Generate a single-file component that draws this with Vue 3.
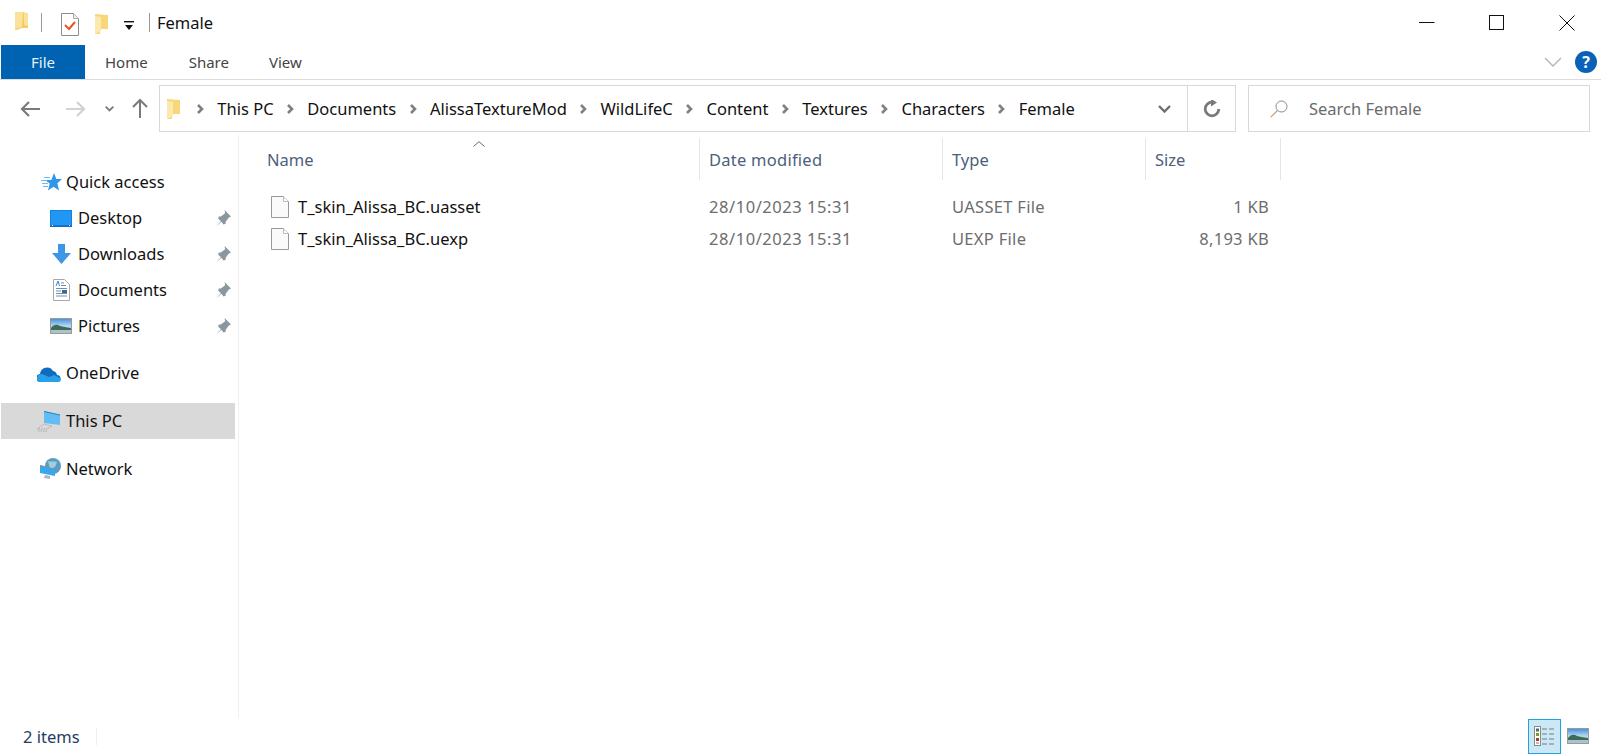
<script setup>
const crumbs = ['This PC', 'Documents', 'AlissaTextureMod', 'WildLifeC', 'Content', 'Textures', 'Characters', 'Female']
const files = [
  { name: 'T_skin_Alissa_BC.uasset', date: '28/10/2023 15:31', type: 'UASSET File', size: '1 KB' },
  { name: 'T_skin_Alissa_BC.uexp', date: '28/10/2023 15:31', type: 'UEXP File', size: '8,193 KB' }
]
</script>

<template>
  <div class="window">
    <header class="title">
      <svg class="i-folder-a" width="16" height="20" viewBox="0 0 16 20"><path d="M1 1h8l5 1v14H9l-7 3H1z" fill="#fbe29a"/><path d="M9 1l1 1v12l4 1v2H8l-6 2-1-1 7-2z" fill="#f4cc62"/></svg>
      <span class="t-sep first"></span>
      <svg class="i-check" width="18" height="23" viewBox="0 0 18 23"><path d="M.5.5h12l5 5v17H.5z" fill="#fff" stroke="#8c8c8c"/><path d="M12.500.5v5h5" fill="#eee" stroke="#aaa"/><path d="M4 12l4 4 6-7" fill="none" stroke="#e8541e" stroke-width="2"/></svg>
      <svg class="i-folder-b" width="15" height="22" viewBox="0 0 15 22"><path d="M1 1l13 1v14L6 16v5H1z" fill="#f7d77a"/><path d="M1 3l6 1v14l-6 3z" fill="#fbe9b0"/></svg>
      <svg class="i-drop" width="10" height="9" viewBox="0 0 10 9"><rect y="0" width="10" height="1.400" fill="#111"/><path d="M1 4h8l-4 5z" fill="#111"/></svg>
      <span class="t-sep second"></span>
      <span class="t-text">Female</span>
      <div class="winctl">
        <svg width="16" height="16" viewBox="0 0 16 16"><path d="M0 7.500h15.500" stroke="#111"/></svg>
        <svg width="16" height="16" viewBox="0 0 16 16"><rect x=".5" y=".5" width="14" height="14" fill="none" stroke="#111"/></svg>
        <svg width="16" height="16" viewBox="0 0 16 16"><path d="M.5.500l15 15M15.500.5l-15 15" stroke="#111" fill="none"/></svg>
      </div>
    </header>

    <div class="ribbon">
      <div class="tab file">File</div>
      <div class="tab home">Home</div>
      <div class="tab share">Share</div>
      <div class="tab view">View</div>
      <div class="rib-right">
        <svg width="18" height="10" viewBox="0 0 18 10"><path d="M1 1l8 8 8-8" fill="none" stroke="#b8b8b8" stroke-width="1.500"/></svg>
        <span class="help">?</span>
      </div>
    </div>

    <nav class="nav">
      <div class="nav-btns">
        <svg width="20" height="16" viewBox="0 0 20 16"><path d="M20 8H2M9 1L2 8l7 7" fill="none" stroke="#7a7a7a" stroke-width="2.200"/></svg>
        <svg class="fwd" width="20" height="16" viewBox="0 0 20 16"><path d="M0 8h18M11 1l7 7-7 7" fill="none" stroke="#d2d2d2" stroke-width="2.200"/></svg>
        <svg class="rec" width="9" height="6" viewBox="0 0 9 6"><path d="M.7.7l3.800 3.800L8.300.7" fill="none" stroke="#7a7a7a" stroke-width="1.800"/></svg>
        <svg class="up" width="16" height="20" viewBox="0 0 16 20"><path d="M8 20V2M1 9l7-7 7 7" fill="none" stroke="#7a7a7a" stroke-width="2"/></svg>
      </div>
      <div class="address">
        <svg class="addr-folder" width="15" height="22" viewBox="0 0 15 22"><path d="M1 1l13 1v14L6 16v5H1z" fill="#f7d77a"/><path d="M1 3l6 1v14l-6 3z" fill="#fbe9b0"/></svg>
        <div class="crumbs">
          <template v-for="c in crumbs" :key="c">
            <svg class="chev" width="7" height="10" viewBox="0 0 7 10"><path d="M1 1l4 4-4 4" fill="none" stroke="#808080" stroke-width="2.600"/></svg>
            <span class="crumb">{{ c }}</span>
          </template>
        </div>
        <div class="addr-drop"><svg width="13" height="8" viewBox="0 0 13 8"><path d="M1 1l5.500 5.500L12 1" fill="none" stroke="#6f6f6f" stroke-width="2.400"/></svg></div>
        <div class="addr-refresh"><svg width="18" height="18" viewBox="0 0 18 18"><path d="M15.800 9A6.800 6.800 0 1 1 9 2.200h2" fill="none" stroke="#7a7a7a" stroke-width="2.800"/><path d="M8 -1l6 3.500L8 6.500z" fill="#7a7a7a"/></svg></div>
      </div>
      <div class="search">
        <svg width="18" height="18" viewBox="0 0 18 18"><circle cx="11.500" cy="6.500" r="5.500" fill="none" stroke="#8a8a8a"/><path d="M7.500 10.500L.8 17.200" stroke="#d99a6c" stroke-width="1.200"/></svg>
        <span>Search Female</span>
      </div>
    </nav>

    <main class="main">
      <aside class="side">
        <div class="group">
          <div class="row top">
            <span class="ibox"><svg width="21" height="19" viewBox="0 0 21 19"><path d="M13 0l2.300 6H21l-4.600 4.300L18 17.500l-5.500-3.800L7 17.500l1.700-7L4 7h6.300z" fill="#2f96ea"/><path d="M0 7.500h6M1 10.500h6M3 4.500h6M2 13.500h5" stroke="#6fbaf0" stroke-width="1.200"/></svg></span>
            <span class="txt">Quick access</span>
          </div>
          <div class="row sub">
            <span class="ibox"><svg width="22" height="17" viewBox="0 0 22 17"><rect width="22" height="16" fill="#0f83e6"/><path d="M1 1h20v14H1z" fill="#1f97f3"/><rect y="15.500" width="22" height="1.500" fill="#0d6dbd"/><path d="M2 15.500h1M19 15.500h1" stroke="#e6f3fc"/></svg></span>
            <span class="txt lbl">Desktop</span>
            <svg class="pin" width="16" height="16" viewBox="0 0 15 15"><path d="M9 0l6 6-2 1-3 4 0 2-2 .5-2-2.500-5 4.500 4.500-5L3 8l.5-2h2l4-3z" fill="#8b979f"/></svg>
          </div>
          <div class="row sub">
            <span class="ibox"><svg width="19" height="20" viewBox="0 0 19 20"><path d="M6 0h7v9h6l-9.500 11L0 9h6z" fill="#3f95e6"/></svg></span>
            <span class="txt lbl">Downloads</span>
            <svg class="pin" width="16" height="16" viewBox="0 0 15 15"><path d="M9 0l6 6-2 1-3 4 0 2-2 .5-2-2.500-5 4.500 4.500-5L3 8l.5-2h2l4-3z" fill="#8b979f"/></svg>
          </div>
          <div class="row sub">
            <span class="ibox"><svg width="17" height="22" viewBox="0 0 17 22"><path d="M.5.500h11l5 5v16H.5z" fill="#fff" stroke="#a8a8a8"/><path d="M8 4h3M8 6.500h5M3 9.500h11M3 12h5M3 14.500h11M3 17h11" stroke="#6f8fae"/><rect x="9" y="11" width="5" height="3" fill="#3a6a8a"/><path d="M3 7l2-5 1.500 5" stroke="#2b8be0" fill="none"/></svg></span>
            <span class="txt lbl">Documents</span>
            <svg class="pin" width="16" height="16" viewBox="0 0 15 15"><path d="M9 0l6 6-2 1-3 4 0 2-2 .5-2-2.500-5 4.500 4.500-5L3 8l.5-2h2l4-3z" fill="#8b979f"/></svg>
          </div>
          <div class="row sub">
            <span class="ibox"><svg width="22" height="16" viewBox="0 0 22 16">
              <defs><linearGradient id="sky" x1="0" y1="0" x2="0" y2="1"><stop offset="0" stop-color="#3f8fe0"/><stop offset=".5" stop-color="#b8d8ee"/><stop offset="1" stop-color="#c8d8d8"/></linearGradient></defs>
              <rect x=".5" y=".5" width="21" height="15" fill="url(#sky)" stroke="#9a9a9a"/><path d="M1 10c3-4 6-4 9-2 3 1 6 1 11 2v3H1z" fill="#3d6b55"/><rect x="1" y="12" width="20" height="3" fill="#a9c4cf"/>
            </svg></span>
            <span class="txt lbl">Pictures</span>
            <svg class="pin" width="16" height="16" viewBox="0 0 15 15"><path d="M9 0l6 6-2 1-3 4 0 2-2 .5-2-2.500-5 4.500 4.500-5L3 8l.5-2h2l4-3z" fill="#8b979f"/></svg>
          </div>
        </div>
        <div class="row top">
          <span class="ibox"><svg class="shift" width="24" height="16" viewBox="0 0 24 16"><path d="M4 16a4 4 0 0 1-1-8 7 7 0 0 1 13-3 5 5 0 0 1 4 4 3.500 3.500 0 0 1 0 7z" fill="#0f6cbd"/><path d="M3 16c-2 0-3-2-3-3.500C0 10 2 8 5 8l7 3 5-2 6 3c2 2 0 4-2 4z" fill="#28a0ea"/></svg></span>
          <span class="txt">OneDrive</span>
        </div>
        <div class="row top selected">
          <span class="ibox"><svg class="shift" width="24" height="21" viewBox="0 0 24 21"><path d="M7 0l16 3.500V14L7 12z" fill="#62bdf6"/><path d="M7 0l16 3.500v1L7 1z" fill="#2f85bd"/><path d="M7 13l-7 5h10l5-3zM1 20h10" fill="none" stroke="#ababab" stroke-dasharray="1.500 1"/></svg></span>
          <span class="txt">This PC</span>
        </div>
        <div class="row top">
          <span class="ibox"><svg width="22" height="22" viewBox="0 0 22 22"><circle cx="13" cy="8" r="8" fill="#5a9cc4"/><path d="M8 3c3 1 7 0 9 1l-2 5-5 2z" fill="#a3cce0"/><path d="M0 7l15 4v7L0 15z" fill="#35a8f0"/><path d="M0 7l15 4v1L0 8z" fill="#8f8f8f"/><path d="M5 17l5 1v3l-6-1z" fill="#aeb6bc"/></svg></span>
          <span class="txt">Network</span>
        </div>
      </aside>

      <section class="list">
        <div class="head">
          <svg class="caret" width="12" height="6" viewBox="0 0 12 6"><path d="M.5 5.500L6 .7l5.500 4.800" fill="none" stroke="#666"/></svg>
          <div class="hc">Name</div>
          <div class="hc date-h">Date modified</div>
          <div class="hc">Type</div>
          <div class="hc">Size</div>
        </div>
        <div v-for="f in files" :key="f.name" class="file-row">
          <div class="fname">
            <svg width="18" height="22" viewBox="0 0 18 22"><path d="M.5.500h12l5 5v16H.5z" fill="#fafafa" stroke="#999"/><path d="M12.500.500v5h5" fill="#fff" stroke="#bbb"/></svg>
            <span class="txt">{{ f.name }}</span>
          </div>
          <div class="meta date">{{ f.date }}</div>
          <div class="meta">{{ f.type }}</div>
          <div class="meta size">{{ f.size }}</div>
        </div>
      </section>
    </main>

    <footer class="status">
      <span class="count">2 items</span>
      <span class="st-sep"></span>
      <div class="views">
        <div class="view-btn on">
          <svg width="21" height="20" viewBox="0 0 21 20"><rect x=".5" y=".5" width="6" height="19" fill="#fff" stroke="#8a8a8a"/><rect x="2" y="2.500" width="3" height="3" fill="#567"/><rect x="2" y="7" width="3" height="3" fill="#7a9a2a"/><rect x="2" y="12" width="3" height="3" fill="#b33a1a"/><rect x="2" y="16" width="3" height="2" fill="#bbb"/><path d="M8 3h5M15 3h5M8 8h5M15 8h5M8 13h5M15 13h5M8 18h5M15 18h5" stroke="#7a7a7a" stroke-width="1.200"/></svg>
        </div>
        <svg class="view-pic" width="22" height="16" viewBox="0 0 22 16"><rect x=".5" y=".5" width="21" height="15" fill="url(#sky)" stroke="#9a9a9a"/><path d="M1 10c3-4 6-4 9-2 3 1 6 1 11 2v3H1z" fill="#3d6b55"/><rect x="1" y="12" width="20" height="3" fill="#a9c4cf"/></svg>
      </div>
    </footer>
  </div>
</template>

<style>
html, body { margin: 0; background: #fff; overflow: hidden; }
</style>

<style scoped>
.window {
  width: 1603px; height: 754px; background: #fff; display: flex; flex-direction: column;
  font-family: "Noto Sans", "Open Sans", sans-serif; font-size: 16.5px; color: #111; overflow: hidden;
}
.title { height: 45px; flex: none; display: flex; align-items: center; box-sizing: border-box; }
.i-folder-a { margin-left: 14px; margin-top: -3px; }
.t-sep { width: 1px; height: 19px; background: #9a9a9a; margin-top: -1px; }
.t-sep.first { margin-left: 11px; }
.i-check { margin-left: 19px; margin-top: 3px; }
.i-folder-b { margin-left: 15px; margin-top: 3px; }
.i-drop { margin-left: 15px; margin-top: 5px; }
.t-sep.second { margin-left: 15px; }
.t-text { margin-left: 7px; margin-top: 0; }
.winctl { margin-left: auto; display: flex; gap: 54px; padding-right: 28px; margin-top: 1px; }

.ribbon { height: 35px; flex: none; display: flex; box-sizing: border-box; border-bottom: 1px solid #dcdcdc; margin-right: 2px; color: #444; align-items: stretch; }
.tab { display: flex; align-items: center; justify-content: center; font-size: 15px; }
.tab.file { width: 84px; margin-left: 1px; background: #0063b1; color: #e8f2fa; }
.tab.home { margin-left: 20px; }
.tab.share { margin-left: 41px; }
.tab.view { margin-left: 40px; }
.rib-right { margin-left: auto; display: flex; align-items: center; gap: 13px; padding-right: 4px; }
.help { width: 22px; height: 22px; border-radius: 50%; background: #0a62b8; color: #fff; font-weight: 700; font-size: 16px; display: flex; align-items: center; justify-content: center; }

.nav { height: 55px; flex: none; display: flex; align-items: flex-start; padding-top: 5px; box-sizing: border-box; }
.nav-btns { width: 159px; flex: none; height: 47px; display: flex; align-items: center; padding-left: 20px; box-sizing: border-box; }
.fwd { margin-left: 26px; }
.rec { margin-left: 19px; }
.up { margin-left: 18px; margin-top: -2px; }
.address { width: 1077px; height: 47px; flex: none; box-sizing: border-box; border: 1px solid #d9d9d9; display: flex; align-items: center; }
.addr-folder { margin-left: 6px; flex: none; }
.crumbs { display: flex; align-items: center; flex: 1; padding-left: 16px; min-width: 0; }
.chev { flex: none; margin-right: 13.350px; }
.crumb { margin-right: 13.350px; white-space: nowrap; }
.addr-drop { width: 51px; height: 100%; flex: none; display: flex; align-items: center; justify-content: center; box-sizing: border-box; padding-left: 4px; border-right: 1px solid #d9d9d9; }
.addr-refresh { width: 47px; flex: none; display: flex; align-items: center; justify-content: center; }
.search { width: 342px; height: 47px; margin-left: 12px; flex: none; box-sizing: border-box; border: 1px solid #d9d9d9; display: flex; align-items: center; padding-left: 21px; gap: 21px; color: #6b6b6b; }

.main { flex: 1; display: flex; min-height: 0; }
.side { width: 239px; flex: none; box-sizing: border-box; border-right: 1px solid #f0f0f0; display: flex; flex-direction: column; gap: 11.7px; padding-top: 29px; }
.row { height: 36px; display: flex; align-items: center; width: 234px; margin-left: 1px; box-sizing: border-box; }
.ibox { flex: none; display: flex; align-items: center; justify-content: center; }
.shift { margin-right: 4px; }
.txt { padding-bottom: 2px; }
.row.top { padding-left: 35px; }
.row.top .ibox { width: 30px; }
.row.selected { background: #d9d9d9; }
.row.sub { padding-left: 48px; padding-right: 4px; }
.row.sub .ibox { width: 24px; }
.lbl { margin-left: 5px; }
.pin { margin-left: auto; }

.list { flex: 1; min-width: 0; padding-top: 3px; padding-left: 21px; }
.head { height: 42px; display: grid; grid-template-columns: 440px 243px 203px 135px; position: relative; color: #4c607a; width: 1021px; }
.caret { position: absolute; left: 213px; top: 3px; }
.hc { display: flex; align-items: center; padding: 1px 0 0 7px; box-sizing: border-box; border-right: 1px solid #e5e5e5; }
.date-h { letter-spacing: .25px; padding-left: 9px; }
.date-h + .hc, .date-h + .hc + .hc { padding-left: 9px; }
.file-row { display: grid; grid-template-columns: 440px 243px 203px 135px; width: 1021px; height: 32px; align-items: center; }
.head + .file-row { margin-top: 11px; }
.fname { display: flex; align-items: center; gap: 9px; padding-left: 11px; }
.meta { padding: 0 0 2px 9px; color: #6d6d6d; letter-spacing: .3px; }
.meta.date { letter-spacing: .55px; }
.size { text-align: right; padding-right: 12px; }

.status { height: 36px; flex: none; display: flex; align-items: center; color: #1f3c63; }
.count { margin-left: 23px; }
.st-sep { width: 1px; height: 17px; background: #eee; margin-left: 16px; }
.views { margin-left: auto; display: flex; align-items: center; padding-right: 14px; height: 100%; }
.view-btn { width: 33px; height: 35px; box-sizing: border-box; border: 1px solid #26a0da; background: #cbe8f6; display: flex; align-items: center; justify-content: center; }
.view-pic { margin-left: 6px; }
</style>
